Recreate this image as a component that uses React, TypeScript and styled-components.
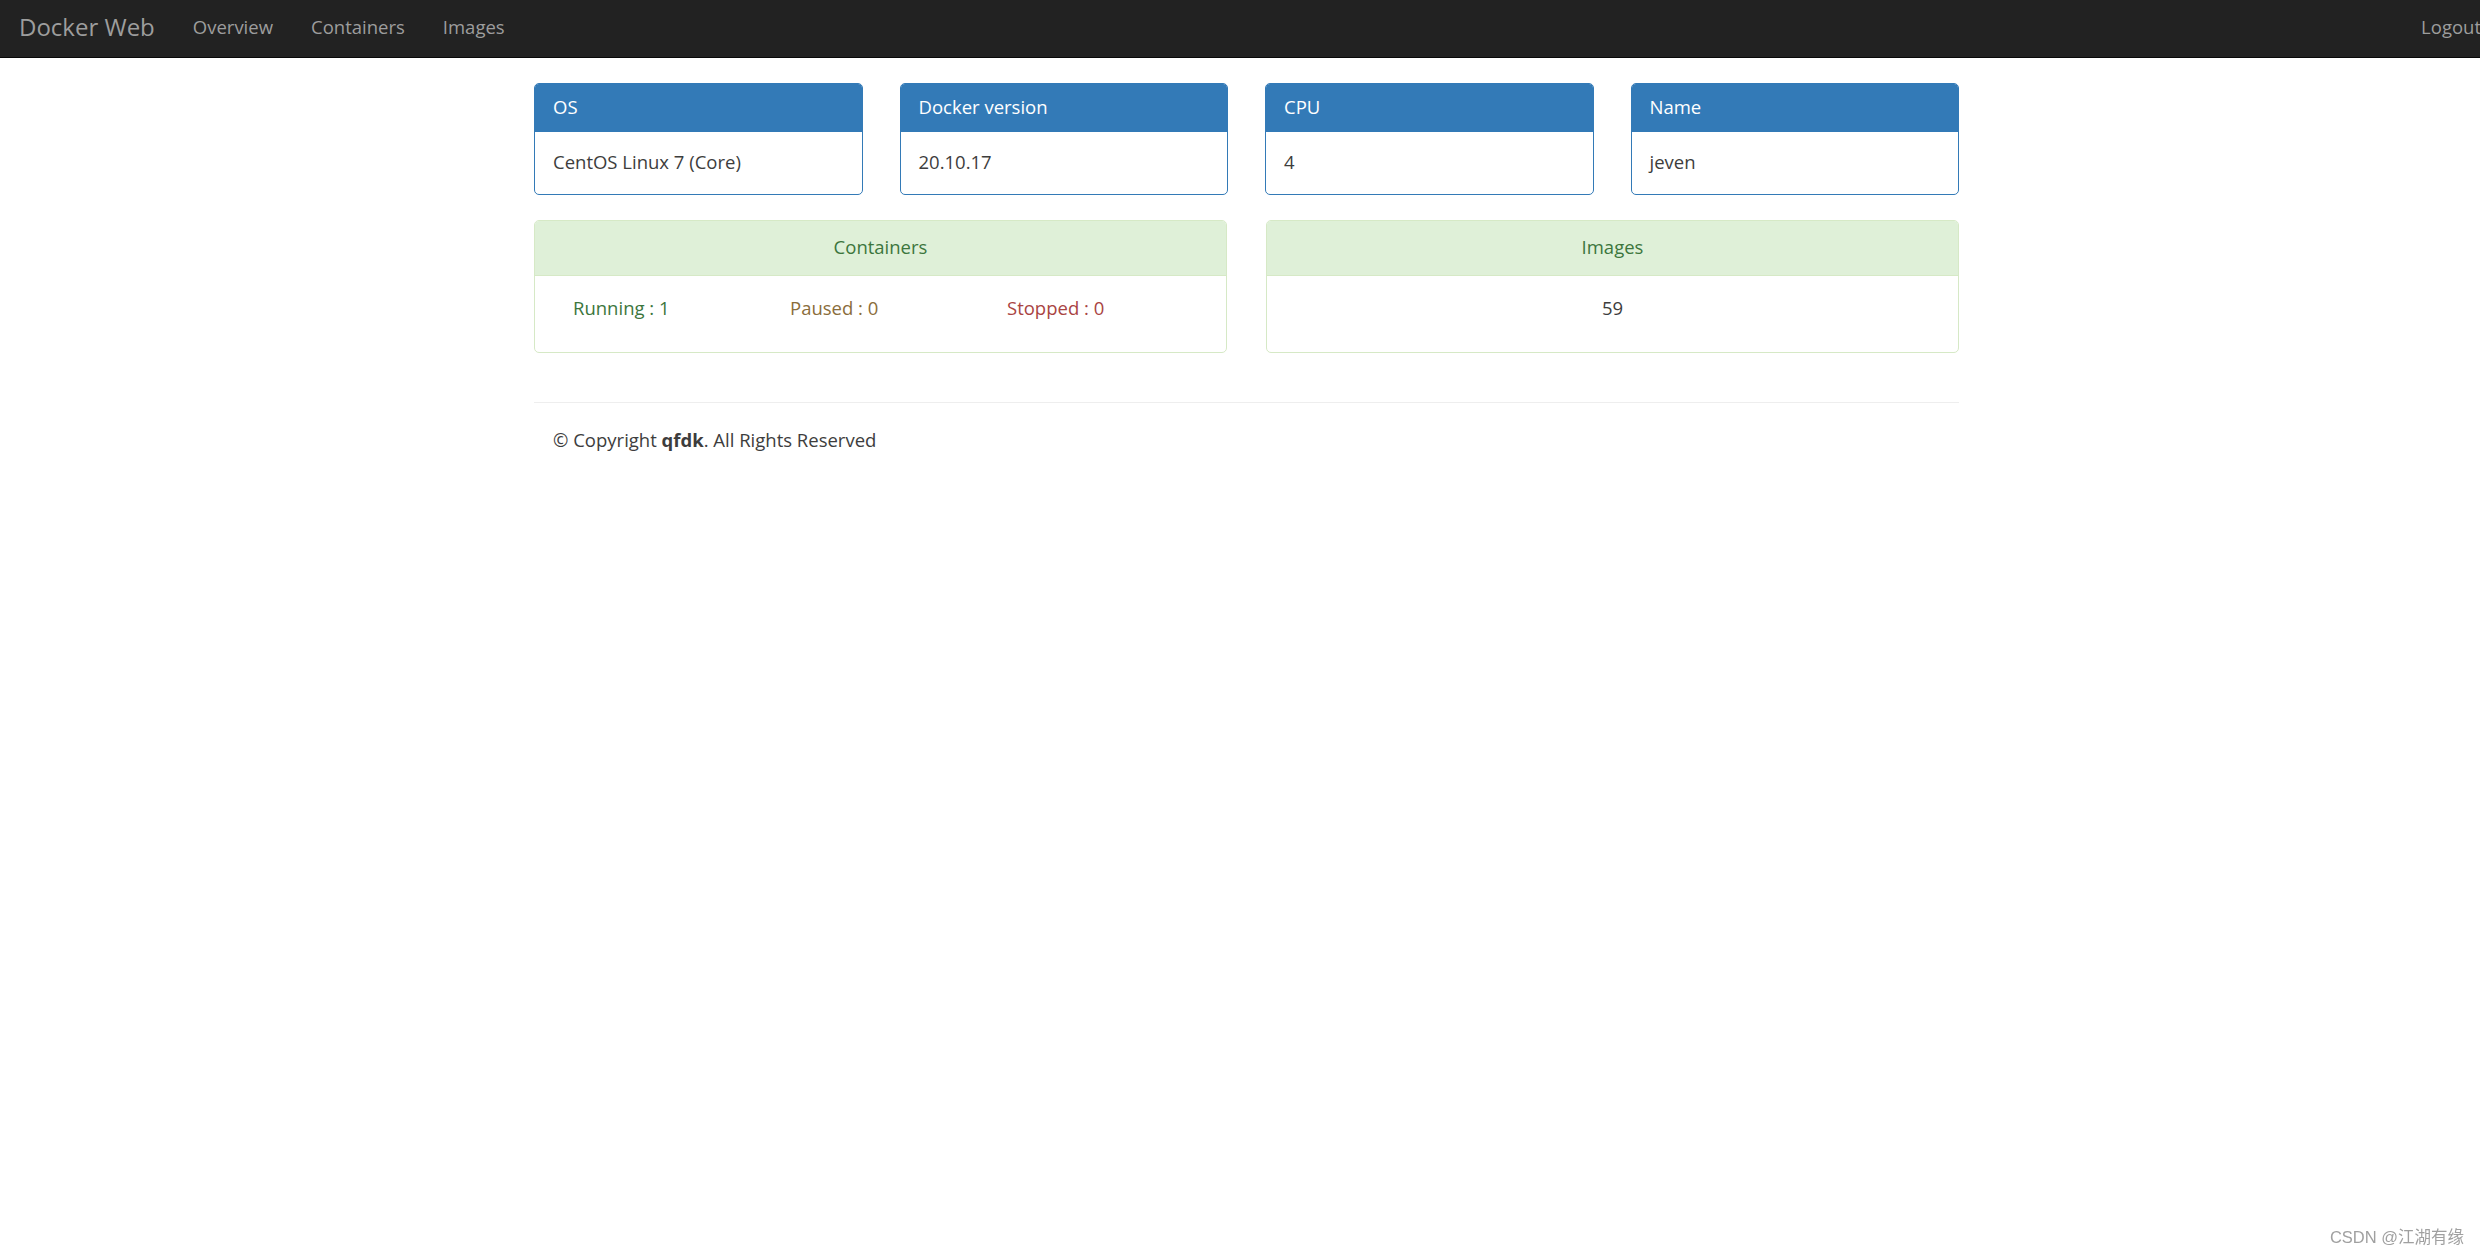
import React from 'react';
import styled, { createGlobalStyle } from 'styled-components';

const GlobalStyle = createGlobalStyle`
  html, body {
    margin: 0;
    padding: 0;
    background: #fff;
  }
  body {
    font-family: 'Open Sans', 'Noto Sans', 'Noto Sans CJK SC', sans-serif;
    font-size: 18.5px;
    line-height: 25px;
    color: #3d3d3d;
  }
`;

const infoCards = [
  { title: 'OS', value: 'CentOS Linux 7 (Core)' },
  { title: 'Docker version', value: '20.10.17' },
  { title: 'CPU', value: '4' },
  { title: 'Name', value: 'jeven' },
];

const App: React.FC = () => {
  return (
    <>
      <GlobalStyle />
      <Navbar>
        <NavLeft>
          <Brand href='#'>Docker Web</Brand>
          <NavLink href='#'>Overview</NavLink>
          <NavLink href='#'>Containers</NavLink>
          <NavLink href='#'>Images</NavLink>
        </NavLeft>
        <Logout href='#'>Logout</Logout>
      </Navbar>

      <Page>
        <Container>
          <CardRow>
            {infoCards.map((card) => (
              <Panel key={card.title} variant='primary'>
                <PanelHeading variant='primary'>{card.title}</PanelHeading>
                <PanelBody>{card.value}</PanelBody>
              </Panel>
            ))}
          </CardRow>

          <StatsRow>
            <Panel variant='success'>
              <PanelHeading variant='success' centered>Containers</PanelHeading>
              <StatsBody>
                <Stat tone='#3c763d'>Running : 1</Stat>
                <Stat tone='#8a6d3b'>Paused : 0</Stat>
                <Stat tone='#a94442'>Stopped : 0</Stat>
              </StatsBody>
            </Panel>
            <Panel variant='success'>
              <PanelHeading variant='success' centered>Images</PanelHeading>
              <StatsBody centered>
                <Stat tone='#3d3d3d'>59</Stat>
              </StatsBody>
            </Panel>
          </StatsRow>

          <Divider />
          <Footer>
            © Copyright <strong>qfdk</strong>. All Rights Reserved
          </Footer>
        </Container>
      </Page>

      <Watermark>CSDN @江湖有缘</Watermark>
    </>
  );
};

export default App;

const Navbar = styled.nav`
  display: flex;
  align-items: center;
  justify-content: space-between;
  height: 58px;
  padding-bottom: 4px;
  box-sizing: border-box;
  background: #222;
  border-bottom: 1px solid #080808;
`;
const NavLeft = styled.div`
  display: flex;
  align-items: center;
  height: 100%;
`;
const Brand = styled.a`
  padding: 0 19px;
  font-size: 24px;
  color: #9d9d9d;
  text-decoration: none;
`;
const NavLink = styled.a`
  padding: 0 19px;
  font-size: 18.5px;
  color: #9d9d9d;
  text-decoration: none;
`;
const Logout = styled.a`
  font-size: 18.5px;
  color: #9d9d9d;
  text-decoration: none;
  margin-right: -1px;
`;

const Page = styled.main`
  padding: 25px 0 0 13px;
`;
const Container = styled.div`
  width: 1425px;
  margin: 0 auto;
`;
const CardRow = styled.div`
  display: grid;
  grid-template-columns: repeat(4, 1fr);
  column-gap: 37px;
  margin-bottom: 25px;
`;
const StatsRow = styled.div`
  display: grid;
  grid-template-columns: repeat(2, 1fr);
  column-gap: 39px;
  margin-bottom: 49px;
`;

type Variant = 'primary' | 'success';

const Panel = styled.div<{ variant: Variant }>`
  border: 1px solid ${(p) => (p.variant === 'primary' ? '#337ab7' : '#d6e9c6')};
  border-radius: 5px;
  background: #fff;
  overflow: hidden;
`;
const PanelHeading = styled.div<{ variant: Variant; centered?: boolean }>`
  height: ${(p) => (p.variant === 'primary' ? '48px' : '55px')};
  display: flex;
  align-items: center;
  justify-content: ${(p) => (p.centered ? 'center' : 'flex-start')};
  padding: 0 18px 3px;
  box-sizing: border-box;
  background: ${(p) => (p.variant === 'primary' ? '#337ab7' : '#dff0d8')};
  color: ${(p) => (p.variant === 'primary' ? '#fff' : '#3c763d')};
  border-bottom: 1px solid ${(p) => (p.variant === 'primary' ? '#337ab7' : '#d6e9c6')};
`;
const PanelBody = styled.div`
  height: 62px;
  display: flex;
  align-items: center;
  padding: 0 18px 4px;
  box-sizing: border-box;
`;
const StatsBody = styled.div<{ centered?: boolean }>`
  height: 76px;
  display: grid;
  grid-template-columns: ${(p) => (p.centered ? '1fr' : 'repeat(3, 217px)')};
  justify-items: ${(p) => (p.centered ? 'center' : 'start')};
  align-items: start;
  padding: 19px ${(p) => (p.centered ? '0' : '38px')};
  box-sizing: border-box;
`;
const Stat = styled.span<{ tone: string }>`
  color: ${(p) => p.tone};
`;

const Divider = styled.hr`
  margin: 0;
  border: 0;
  border-top: 1px solid #eee;
`;
const Footer = styled.p`
  margin: 24px 0 0;
  padding-left: 19px;
  color: #3d3d3d;
  strong {
    font-weight: 700;
  }
`;

const Watermark = styled.div`
  position: fixed;
  right: 16px;
  bottom: 8px;
  font-family: 'Liberation Sans', 'Noto Sans CJK SC', sans-serif;
  font-size: 16.5px;
  color: #a0a0a0;
`;
